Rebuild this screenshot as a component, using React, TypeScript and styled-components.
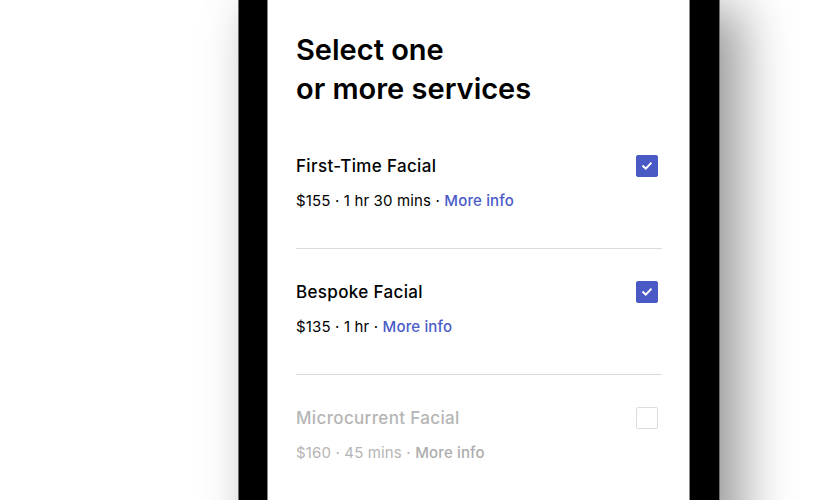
import React from "react";
import styled, { createGlobalStyle } from "styled-components";

const Global = createGlobalStyle`
  html, body { margin: 0; padding: 0; background: #ffffff; }
  body { font-family: "Inter", "Liberation Sans", sans-serif; -webkit-font-smoothing: antialiased; }
`;

const Stage = styled.div`
  width: 826px;
  height: 500px;
  overflow: hidden;
  display: flex;
  padding-left: 238px;
  box-sizing: border-box;
  background: #fff;
`;

const Device = styled.div`
  width: 482px;
  height: 620px;
  flex-shrink: 0;
  box-sizing: border-box;
  background: #000;
  border-left: 1px solid #6e6e6e;
  border-right: 1px solid #6e6e6e;
  padding: 0 29px 0 28px;
  display: flex;
  box-shadow: 20px 8px 50px rgba(0, 0, 0, 0.42);
`;

const Screen = styled.div`
  flex: 1;
  background: #fff;
  border-left: 1px solid #8a8a8a;
  border-right: 1px solid #8a8a8a;
  padding: 30px 27px 0 28px;
  display: flex;
  flex-direction: column;
`;

const Heading = styled.h1`
  margin: 0 0 15px;
  font-size: 29px;
  line-height: 39px;
  font-weight: 600;
  color: #000;
  letter-spacing: 0;
`;

const Item = styled.div<{ $disabled?: boolean }>`
  display: flex;
  justify-content: space-between;
  align-items: flex-start;
  padding: 31px 4px 36px 0;
  border-bottom: 1px solid #dadada;
  color: ${(p) => (p.$disabled ? "#b5b5b5" : "#000")};
`;

const Info = styled.div`
  display: flex;
  flex-direction: column;
  gap: 12px;
`;

const Title = styled.div`
  font-size: 17px;
  line-height: 24px;
  font-weight: 500;
  letter-spacing: 0.35px;
`;

const Meta = styled.div`
  font-size: 15px;
  line-height: 22px;
  font-weight: 400;
  letter-spacing: 0.15px;
`;

const Link = styled.a<{ $disabled?: boolean }>`
  color: ${(p) => (p.$disabled ? "#adadad" : "#4a5bc7")};
  font-weight: 500;
  text-decoration: none;
`;

const Box = styled.div<{ $checked?: boolean }>`
  width: 22px;
  height: 22px;
  margin-top: 1px;
  box-sizing: border-box;
  border-radius: 2px;
  display: flex;
  align-items: center;
  justify-content: center;
  background: ${(p) => (p.$checked ? "#4a5ac4" : "#fff")};
  border: 1px solid ${(p) => (p.$checked ? "#4a5ac4" : "#dddddd")};
`;

const services = [
  { title: "First-Time Facial", price: "$155", time: "1 hr 30 mins", checked: true },
  { title: "Bespoke Facial", price: "$135", time: "1 hr", checked: true },
  { title: "Microcurrent Facial", price: "$160", time: "45 mins", checked: false, disabled: true },
];

const Check = () => (
  <svg width="10" height="8" viewBox="0 0 10 8" fill="none">
    <path d="M1.2 4.2 L3.8 6.6 L8.8 1.4" stroke="#fff" strokeWidth="2" strokeLinecap="square" />
  </svg>
);

export default function App() {
  return (
    <>
      <Global />
      <Stage>
        <Device>
          <Screen>
            <Heading>
              Select one
              <br />
              or more services
            </Heading>
            {services.map((s) => (
              <Item key={s.title} $disabled={s.disabled}>
                <Info>
                  <Title>{s.title}</Title>
                  <Meta>
                    {s.price} · {s.time} · <Link $disabled={s.disabled}>More info</Link>
                  </Meta>
                </Info>
                <Box $checked={s.checked}>{s.checked && <Check />}</Box>
              </Item>
            ))}
          </Screen>
        </Device>
      </Stage>
    </>
  );
}
